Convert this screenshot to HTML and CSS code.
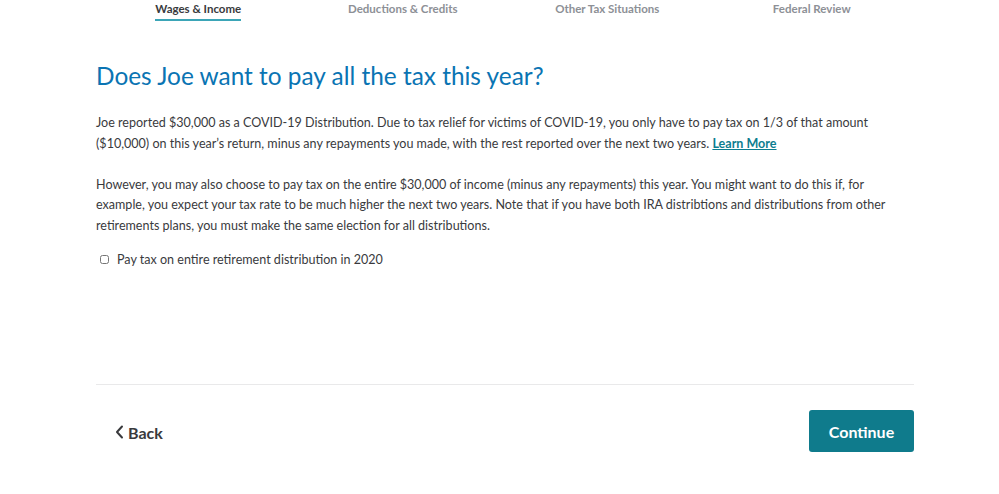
FILE: index.html
```html
<!DOCTYPE html>
<html lang="en">
  <head>
    <meta charset="UTF-8" />
    <title>Wages &amp; Income</title>
    <link rel="stylesheet" href="styles.css">
  </head>
  <body>
    <div class="page">
      <!-- Progress tabs -->
      <nav class="tabs">
        <div class="tab active"><span>Wages &amp; Income</span></div>
        <div class="tab"><span>Deductions &amp; Credits</span></div>
        <div class="tab"><span>Other Tax Situations</span></div>
        <div class="tab"><span>Federal Review</span></div>
      </nav>

      <main class="content">
        <h1 class="title">Does Joe want to pay all the tax this year?</h1>
        <p class="text">
          Joe reported $30,000 as a COVID-19 Distribution. Due to tax relief for victims of COVID-19, you only have to pay tax on 1/3 of that amount ($10,000) on this year’s return, minus any repayments you made, with the rest reported over the next two years. <a href="#" class="learn">Learn More</a>
        </p>
        <p class="text">
          However, you may also choose to pay tax on the entire $30,000 of income (minus any repayments) this year. You might want to do this if, for example, you expect your tax rate to be much higher the next two years. Note that if you have both IRA distribtions and distributions from other retirements plans, you must make the same election for all distributions.
        </p>
        <label class="check">
          <input type="checkbox" />
          <span>Pay tax on entire retirement distribution in 2020</span>
        </label>
      </main>

      <footer class="actions">
        <button class="back-button">
          <svg width="9" height="14" viewBox="0 0 9 14"><path d="M7 1.5 L2 7 L7 12.5" fill="none" stroke="#393a3d" stroke-width="2" stroke-linecap="round" stroke-linejoin="round"/></svg>
          Back
        </button>
        <button class="continue-button">Continue</button>
      </footer>
    </div>
  </body>
</html>
```

FILE: styles.css
```css
body {
  margin: 0;
  background: #ffffff;
  font-family: "Lato", "Open Sans", sans-serif;
  color: #393a3d;
}

.page {
  width: 818px;
  margin-left: 96px;
}

.tabs {
  display: flex;
}

.tab {
  flex: 1;
  text-align: center;
  font-size: 11.5px;
  font-weight: 700;
  color: #8d9096;
}

.tab span {
  display: inline-block;
  padding-top: 2px;
  padding-bottom: 4px;
  border-bottom: 2px solid transparent;
}

.tab.active span {
  color: #393a3d;
  border-bottom-color: #3ba5b7;
}

.content {
  height: 364px;
  padding-top: 22px;
  box-sizing: border-box;
  border-bottom: 1px solid #e9e9ea;
}

.title {
  margin: 18px 0 22px;
  font-size: 24.4px;
  font-weight: 400;
  color: #0a74b3;
  line-height: 30px;
}

.text {
  margin: 0 0 20.5px;
  font-size: 12.55px;
  line-height: 20.5px;
}

.learn {
  color: #0d7d8f;
  font-weight: 700;
  text-decoration: underline;
}

.check {
  display: flex;
  align-items: center;
  gap: 8px;
  font-size: 12.55px;
  margin-top: -5px;
  margin-left: 4px;
}

.check input {
  margin: 0;
  width: 9px;
  height: 9px;
}

.actions {
  display: flex;
  justify-content: space-between;
  align-items: center;
  padding-top: 25px;
}

.back-button {
  display: flex;
  align-items: center;
  gap: 4px;
  margin-left: 19px;
  margin-top: 2px;
  padding: 0;
  border: none;
  background: none;
  font-family: inherit;
  font-size: 16px;
  font-weight: 700;
  color: #393a3d;
  cursor: pointer;
}

.continue-button {
  width: 105px;
  height: 42px;
  border: none;
  border-radius: 3px;
  background: #0f7b8c;
  color: #ffffff;
  font-family: inherit;
  font-size: 16px;
  font-weight: 700;
  cursor: pointer;
}
```
